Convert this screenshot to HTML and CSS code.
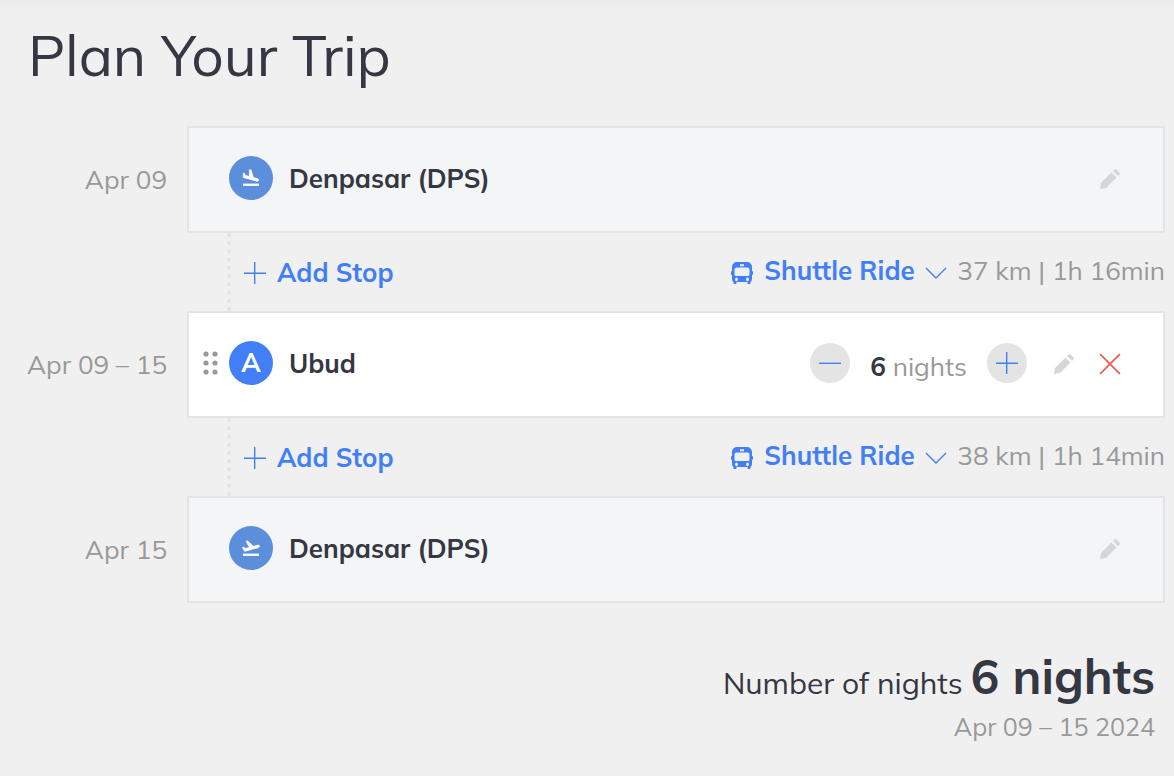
FILE: index.html
```
<!DOCTYPE html>
<html lang="en">
<head>
  <meta charset="UTF-8">
  <meta name="viewport" content="width=device-width, initial-scale=1.0">
  <title>Plan Your Trip</title>
  <link rel="stylesheet" href="styles.css">
</head>
<body>

  <!-- Shared icons -->
  <svg class="sprite" aria-hidden="true">
    <symbol id="icon-landing" viewBox="0 0 24 24">
      <path d="M2.500 18.700h19v2.800h-19z"/>
      <path d="M9.680 13.270l4.350 1.160 5.310 1.420c.8.210 1.620-.260 1.840-1.060.210-.8-.260-1.620-1.060-1.840l-5.310-1.420-2.760-9.020L10.120 2v8.280L5.150 8.950l-.930-2.320-1.450-.390v5.170l1.600.430 5.310 1.430z" stroke="currentColor"/>
    </symbol>
    <symbol id="icon-takeoff" viewBox="0 0 24 24">
      <path d="M2.500 18.700h19v2.800h-19z"/>
      <path d="M22.070 9.640c-.210-.8-1.040-1.280-1.840-1.060L14.920 10l-6.900-6.430-1.930.510 4.140 7.170-4.970 1.330-1.970-1.540-1.450.390 1.820 3.160.770 1.330 1.600-.430 5.310-1.420 4.350-1.160L21 11.490c.810-.230 1.280-1.050 1.070-1.850z" stroke="currentColor"/>
    </symbol>
    <symbol id="icon-edit" viewBox="0 0 22 22">
      <path d="M1 21l1-6L12.500 4.500l5 5L7 20l-6 1zM14 3l1.500-1.500q1-1 2 0l3 3q1 1 0 2L19 8z"/>
    </symbol>
    <symbol id="icon-plus" viewBox="0 0 22 22">
      <path d="M0 11.300h22M10.700 0v22" fill="none" stroke="currentColor" stroke-width="1.400"/>
    </symbol>
    <symbol id="icon-minus" viewBox="0 0 22 22">
      <path d="M0 11.300h22" fill="none" stroke="currentColor" stroke-width="1.400"/>
    </symbol>
    <symbol id="icon-close" viewBox="0 0 20 20">
      <path d="M1 1l18 18M19 1L1 19" fill="none" stroke="currentColor" stroke-width="1.500"/>
    </symbol>
    <symbol id="icon-chevron" viewBox="0 0 22 12">
      <path d="M1 1l10 10L21 1" fill="none" stroke="currentColor" stroke-width="1.400"/>
    </symbol>
    <symbol id="icon-bus" viewBox="0 0 22 22">
      <path fill-rule="evenodd" d="M6 0h10a5 5 0 0 1 5 5v4a1 1 0 0 1 1 1v2a1 1 0 0 1-1 1v4q0 2-1.500 3v1a1 1 0 0 1-3 0v-1h-11v1a1 1 0 0 1-3 0v-1Q1 19 1 17v-4a1 1 0 0 1-1-1v-2a1 1 0 0 1 1-1V5a5 5 0 0 1 5-5zM9 2.200v2h4v-2zM5.500 5.500A2 2 0 0 0 3.500 7.500v5a1.500 1.500 0 0 0 1.500 1.500h12a1.500 1.500 0 0 0 1.500-1.500v-5a2 2 0 0 0-2-2zM5.500 15.500a1.400 1.900 0 1 0 .01 0zM16.500 15.500a1.400 1.900 0 1 0 .01 0z"/>
    </symbol>
    <symbol id="icon-drag" viewBox="0 0 16 24">
      <circle cx="3" cy="3" r="2.600"/><circle cx="12" cy="3" r="2.600"/>
      <circle cx="3" cy="12" r="2.600"/><circle cx="12" cy="12" r="2.600"/>
      <circle cx="3" cy="21" r="2.600"/><circle cx="12" cy="21" r="2.600"/>
    </symbol>
  </svg>

  <main class="planner">
    <h1 class="title">Plan Your Trip</h1>

    <div class="route">
      <div class="date">Apr 09</div>
      <section class="stop stop-airport">
        <span class="marker"><svg class="marker-icon"><use href="#icon-landing"/></svg></span>
        <h2 class="stop-name">Denpasar (DPS)</h2>
        <button class="icon-button edit" type="button" aria-label="Edit arrival"><svg><use href="#icon-edit"/></svg></button>
      </section>

      <div class="leg">
        <button class="add-stop" type="button"><svg><use href="#icon-plus"/></svg>Add Stop</button>
        <div class="transport">
          <svg class="bus"><use href="#icon-bus"/></svg>
          <span class="transport-picker">
            <select class="transport-select" aria-label="Transport to Ubud">
              <option>Shuttle Ride</option>
            </select>
            <svg class="chevron"><use href="#icon-chevron"/></svg>
          </span>
          <span class="distance">37 km | 1h 16min</span>
        </div>
      </div>

      <div class="date">Apr 09 – 15</div>
      <section class="stop">
        <button class="drag" type="button" aria-label="Move stop"><svg><use href="#icon-drag"/></svg></button>
        <span class="marker marker-city">A</span>
        <h2 class="stop-name">Ubud</h2>
        <div class="nights">
          <button class="round-button" type="button" aria-label="Fewer nights"><svg><use href="#icon-minus"/></svg></button>
          <span class="nights-count"><b>6</b> nights</span>
          <button class="round-button" type="button" aria-label="More nights"><svg><use href="#icon-plus"/></svg></button>
        </div>
        <button class="icon-button edit" type="button" aria-label="Edit Ubud"><svg><use href="#icon-edit"/></svg></button>
        <button class="icon-button remove" type="button" aria-label="Remove Ubud"><svg><use href="#icon-close"/></svg></button>
      </section>

      <div class="leg">
        <button class="add-stop" type="button"><svg><use href="#icon-plus"/></svg>Add Stop</button>
        <div class="transport">
          <svg class="bus"><use href="#icon-bus"/></svg>
          <span class="transport-picker">
            <select class="transport-select" aria-label="Transport to Denpasar">
              <option>Shuttle Ride</option>
            </select>
            <svg class="chevron"><use href="#icon-chevron"/></svg>
          </span>
          <span class="distance">38 km | 1h 14min</span>
        </div>
      </div>

      <div class="date">Apr 15</div>
      <section class="stop stop-airport">
        <span class="marker"><svg class="marker-icon"><use href="#icon-takeoff"/></svg></span>
        <h2 class="stop-name">Denpasar (DPS)</h2>
        <button class="icon-button edit" type="button" aria-label="Edit departure"><svg><use href="#icon-edit"/></svg></button>
      </section>
    </div>

    <footer class="summary">
      <p class="total">Number of nights <strong>6 nights</strong></p>
      <p class="total-dates">Apr 09 – 15 2024</p>
    </footer>
  </main>

</body>
</html>
```
FILE: styles.css
```
* {
  box-sizing: border-box;
}
body {
  margin: 0;
  min-height: 100vh;
  background: linear-gradient(#ebebeb, #f0f0f0 10px) #f0f0f0;
  color: #353743;
  font-family: Mulish, Muli, "Open Sans", sans-serif;
  font-size: 26px;
  line-height: 32px;
}
h1, h2, p {
  margin: 0;
}
button, select {
  margin: 0;
  padding: 0;
  border: 0;
  background: none;
  color: inherit;
  font: inherit;
  cursor: pointer;
}
svg {
  display: block;
  flex: none;
  fill: currentColor;
}
.sprite {
  position: absolute;
  width: 0;
  height: 0;
}
.planner {
  padding: 19px 9px 20px 0;
}
.title {
  padding-left: 28px;
  font-size: 57px;
  font-weight: 400;
  line-height: 72px;
}

/* Dates on the left, stops and legs on the right */
.route {
  display: grid;
  grid-template-columns: 187px 1fr;
  margin-top: 35px;
}
.date {
  align-self: center;
  padding-right: 20px;
  color: #999;
  text-align: right;
  white-space: nowrap;
}
.stop {
  position: relative;
  display: flex;
  align-items: center;
  padding: 28px 42px 31px 40px;
  border: 2px solid #e4e4e4;
  background: #fff;
}
.stop-airport {
  background: #f4f5f7;
}
.marker {
  display: flex;
  align-items: center;
  justify-content: center;
  width: 44px;
  height: 44px;
  border-radius: 50%;
  background: #5b8edb;
  color: #fff;
  font-weight: 700;
}
.marker-city {
  background: #427ff7;
}
.marker-icon {
  width: 20px;
  height: 20px;
}
.stop-name {
  flex: 1;
  padding: 2px 0 0 16px;
  font-size: 26px;
  font-weight: 700;
}
.drag {
  position: absolute;
  left: 14px;
  color: #999;
}
.drag svg {
  width: 16px;
  height: 24px;
}
.icon-button {
  padding-top: 2px;
}
.icon-button svg {
  width: 22px;
  height: 22px;
}
.edit {
  color: #d5d6d9;
}
.remove {
  margin-left: 24px;
  color: #ee5a4b;
}
.nights {
  display: flex;
  align-items: center;
  margin-right: 26px;
}
.nights-count {
  padding: 8px 20px 0;
  color: #999;
}
.nights-count b {
  color: #353743;
}
.round-button {
  display: flex;
  align-items: center;
  justify-content: center;
  width: 40px;
  height: 40px;
  border-radius: 50%;
  background: #e4e4e4;
  color: #427ff7;
}
.round-button svg {
  width: 22px;
  height: 22px;
}

/* Dotted connector with the transport between two stops */
.leg {
  grid-column: 2;
  display: flex;
  align-items: center;
  justify-content: space-between;
  height: 78px;
  margin-left: 40px;
  padding-left: 13px;
  border-left: 4px dotted #e4e4e4;
}
.add-stop {
  display: flex;
  align-items: center;
  gap: 11px;
  padding-top: 2px;
  color: #427ff7;
  font-weight: 700;
}
.add-stop svg {
  width: 22px;
  height: 22px;
}
.transport {
  display: flex;
  align-items: center;
  padding-bottom: 2px;
}
.bus {
  width: 22px;
  height: 22px;
  margin: 4px 11px 0 0;
  color: #427ff7;
}
.transport-picker {
  position: relative;
  display: flex;
}
.transport-select {
  appearance: none;
  padding-right: 42px;
  color: #427ff7;
  font-weight: 700;
}
.chevron {
  position: absolute;
  top: 12px;
  right: 10px;
  width: 22px;
  height: 12px;
  color: #427ff7;
  pointer-events: none;
}
.distance {
  color: #999;
  white-space: nowrap;
}

.summary {
  padding-right: 10px;
  margin-top: 43px;
  text-align: right;
}
.total {
  font-size: 30px;
  line-height: 60px;
}
.total strong {
  font-size: 48px;
}
.total-dates {
  color: #999;
  font-size: 25px;
  line-height: 28px;
}
```
